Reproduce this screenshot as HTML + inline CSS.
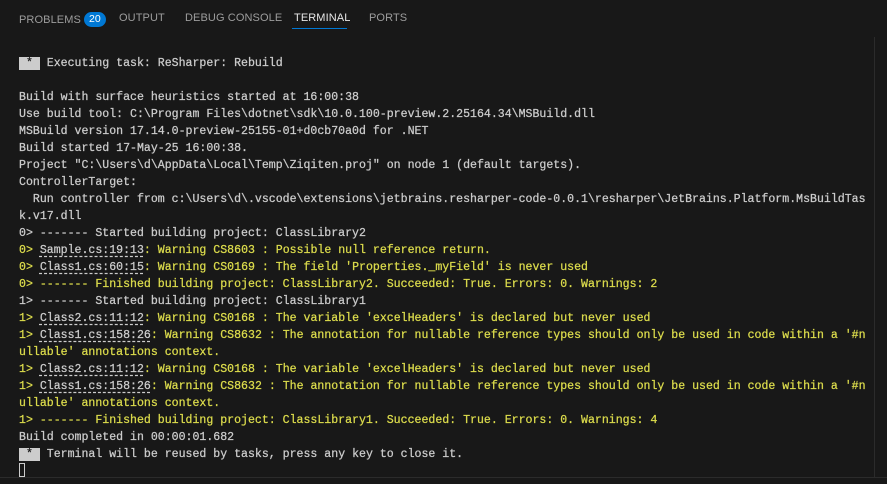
<!DOCTYPE html><html><head><style>
body{margin:0;width:887px;height:484px;background:#181818;overflow:hidden;position:relative;font-family:"Liberation Sans",sans-serif}
.tabs{position:absolute;top:0;left:0;height:36px;width:887px}
.tab{position:absolute;top:12px;font-size:11px;color:#9d9d9d;letter-spacing:0.1px}
.badge{display:inline-block;background:#0078d4;color:#fff;border-radius:9px;padding:0 5px;font-size:10.5px;line-height:15px;margin-left:3px;vertical-align:1px}
.act{color:#e7e7e7}
.ul{position:absolute;left:292px;top:28px;width:55px;height:1px;background:#0078d4}
pre{position:absolute;left:19px;margin:0;font-family:"Liberation Mono",monospace;font-size:11.57px;line-height:17px;color:#cccccc;white-space:pre;-webkit-text-stroke:0.25px currentColor}
.y{color:#dcdc4c}
.l{text-decoration:underline dashed;text-underline-offset:3px;color:#cccccc}
.blk{background:#cccccc;color:#181818}
.sb{position:absolute;left:874px;top:37px;width:1px;height:440px;background:#2b2b2b}
.bt{position:absolute;left:0;top:477px;width:887px;height:1px;background:#2b2b2b}
</style></head><body>
<div class="tabs">
<span class="tab" style="left:19px">PROBLEMS<span class="badge">20</span></span>
<span class="tab" style="left:119px">OUTPUT</span>
<span class="tab" style="left:185px">DEBUG CONSOLE</span>
<span class="tab act" style="left:294px">TERMINAL</span>
<span class="tab" style="left:369px">PORTS</span>
<div class="ul"></div>
</div>
<div class="sb"></div><div class="bt"></div>
<pre style="top:55px"><span class="blk"> * </span> Executing task: ReSharper: Rebuild</pre>
<pre style="top:89px">Build with surface heuristics started at 16:00:38
Use build tool: C:\Program Files\dotnet\sdk\10.0.100-preview.2.25164.34\MSBuild.dll
MSBuild version 17.14.0-preview-25155-01+d0cb70a0d for .NET
Build started 17-May-25 16:00:38.
Project "C:\Users\d\AppData\Local\Temp\Ziqiten.proj" on node 1 (default targets).
ControllerTarget:
  Run controller from c:\Users\d\.vscode\extensions\jetbrains.resharper-code-0.0.1\resharper\JetBrains.Platform.MsBuildTas
k.v17.dll
0> ------- Started building project: ClassLibrary2
<span class="y">0> </span><span class="l">Sample.cs:19:13</span><span class="y">: Warning CS8603 : Possible null reference return.</span>
<span class="y">0> </span><span class="l">Class1.cs:60:15</span><span class="y">: Warning CS0169 : The field 'Properties._myField' is never used</span>
<span class="y">0> ------- Finished building project: ClassLibrary2. Succeeded: True. Errors: 0. Warnings: 2</span>
1> ------- Started building project: ClassLibrary1
<span class="y">1> </span><span class="l">Class2.cs:11:12</span><span class="y">: Warning CS0168 : The variable 'excelHeaders' is declared but never used</span>
<span class="y">1> </span><span class="l">Class1.cs:158:26</span><span class="y">: Warning CS8632 : The annotation for nullable reference types should only be used in code within a '#n</span>
<span class="y">ullable' annotations context.</span>
<span class="y">1> </span><span class="l">Class2.cs:11:12</span><span class="y">: Warning CS0168 : The variable 'excelHeaders' is declared but never used</span>
<span class="y">1> </span><span class="l">Class1.cs:158:26</span><span class="y">: Warning CS8632 : The annotation for nullable reference types should only be used in code within a '#n</span>
<span class="y">ullable' annotations context.</span>
<span class="y">1> ------- Finished building project: ClassLibrary1. Succeeded: True. Errors: 0. Warnings: 4</span>
Build completed in 00:00:01.682
<span class="blk"> * </span> Terminal will be reused by tasks, press any key to close it.
<span style="display:inline-block;width:6px;height:14px;border:1px solid #ccc;box-sizing:border-box;vertical-align:-3px"></span></pre>
</body></html>
